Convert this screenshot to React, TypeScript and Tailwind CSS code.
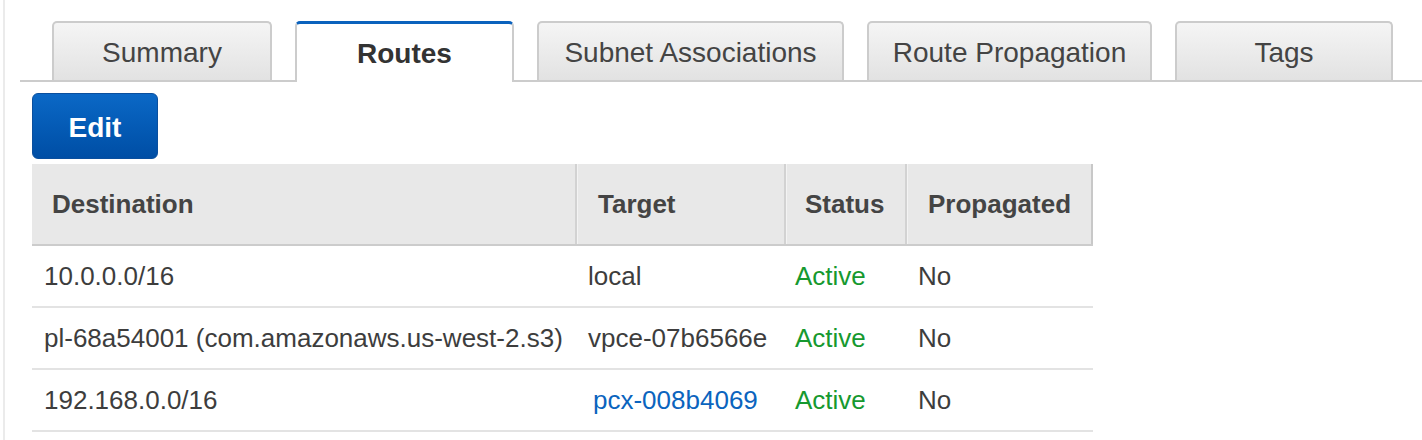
import React from "react";

type Route = {
  destination: string;
  target: string;
  targetLink?: boolean;
  status: string;
  propagated: string;
};

const routes: Route[] = [
  { destination: "10.0.0.0/16", target: "local", status: "Active", propagated: "No" },
  {
    destination: "pl-68a54001 (com.amazonaws.us-west-2.s3)",
    target: "vpce-07b6566e",
    status: "Active",
    propagated: "No",
  },
  {
    destination: "192.168.0.0/16",
    target: "pcx-008b4069",
    targetLink: true,
    status: "Active",
    propagated: "No",
  },
];

const tabs = [
  { label: "Summary", width: "w-[220px]" },
  { label: "Routes", width: "w-[219px]", active: true },
  { label: "Subnet Associations", width: "w-[307px]" },
  { label: "Route Propagation", width: "w-[285px]" },
  { label: "Tags", width: "w-[218px]" },
];

const cols = "grid grid-cols-[545px_209px_121px_186px] w-[1061px]";

const App = () => {
  return (
    <div className="h-[440px] w-full overflow-hidden bg-white pl-[3px] font-['Liberation_Sans',Arial,sans-serif] text-[#444]">
      <div className="h-full border-l-2 border-[#ebebeb] pl-[15px]">
        {/* tabs */}
        <div className="flex items-end gap-[23px] border-b-2 border-[#cccccc] pl-[32px] pt-[21px]">
          {tabs.map((tab) =>
            tab.active ? (
              <div
                key={tab.label}
                className={`${tab.width} relative -mb-[2px] flex h-[61px] items-center justify-center rounded-t-[5px] border-x-2 border-t-[3px] border-x-[#cccccc] border-t-[#0b62bd] bg-white pt-[1px] text-[28px] font-bold text-[#333]`}
              >
                {tab.label}
              </div>
            ) : (
              <div
                key={tab.label}
                className={`${tab.width} flex h-[59px] items-center justify-center rounded-t-[5px] border-x-2 border-t-2 border-[#cccccc] bg-linear-to-b from-[#f5f5f5] to-[#e2e2e2] pt-[2px] text-[28px] text-[#444]`}
              >
                {tab.label}
              </div>
            )
          )}
        </div>

        <div className="pl-[12px] pt-[11px]">
          <button className="flex h-[66px] w-[126px] items-center justify-center rounded-[6px] border border-[#0a4f9e] bg-linear-to-b from-[#0b68c6] to-[#004ea5] pt-[3px] text-[28px] font-bold text-white">
            Edit
          </button>

          {/* routes table */}
          <div className="mt-[5px]">
            <div className={`${cols} h-[82px] border-b-2 border-[#cccccc] bg-[#e8e8e8] text-[26px] font-bold text-[#444]`}>
              <div className="flex items-center border-r-2 border-[#d2d2d2] pl-5">Destination</div>
              <div className="flex items-center border-l border-r-2 border-l-[#f3f3f3] border-r-[#d2d2d2] pl-5">Target</div>
              <div className="flex items-center border-l border-r-2 border-l-[#f3f3f3] border-r-[#d2d2d2] pl-[18px]">Status</div>
              <div className="flex items-center border-l border-r-2 border-l-[#f3f3f3] border-r-[#c8c8c8] pl-5">Propagated</div>
            </div>
            {routes.map((r) => (
              <div
                key={r.destination}
                className={`${cols} h-[62px] border-b-2 border-[#e3e3e3] text-[26px] text-[#3d3d3d]`}
              >
                <div className="flex items-center pl-[12px]">{r.destination}</div>
                <div className="flex items-center pl-[11px]">
                  {r.targetLink ? (
                    <a className="ml-[5px] text-[#0b64be]">{r.target}</a>
                  ) : (
                    r.target
                  )}
                </div>
                <div className="flex items-center pl-[9px] text-[#16992f]">{r.status}</div>
                <div className="flex items-center pl-[11px]">{r.propagated}</div>
              </div>
            ))}
          </div>
        </div>
      </div>
    </div>
  );
};

export default App;
